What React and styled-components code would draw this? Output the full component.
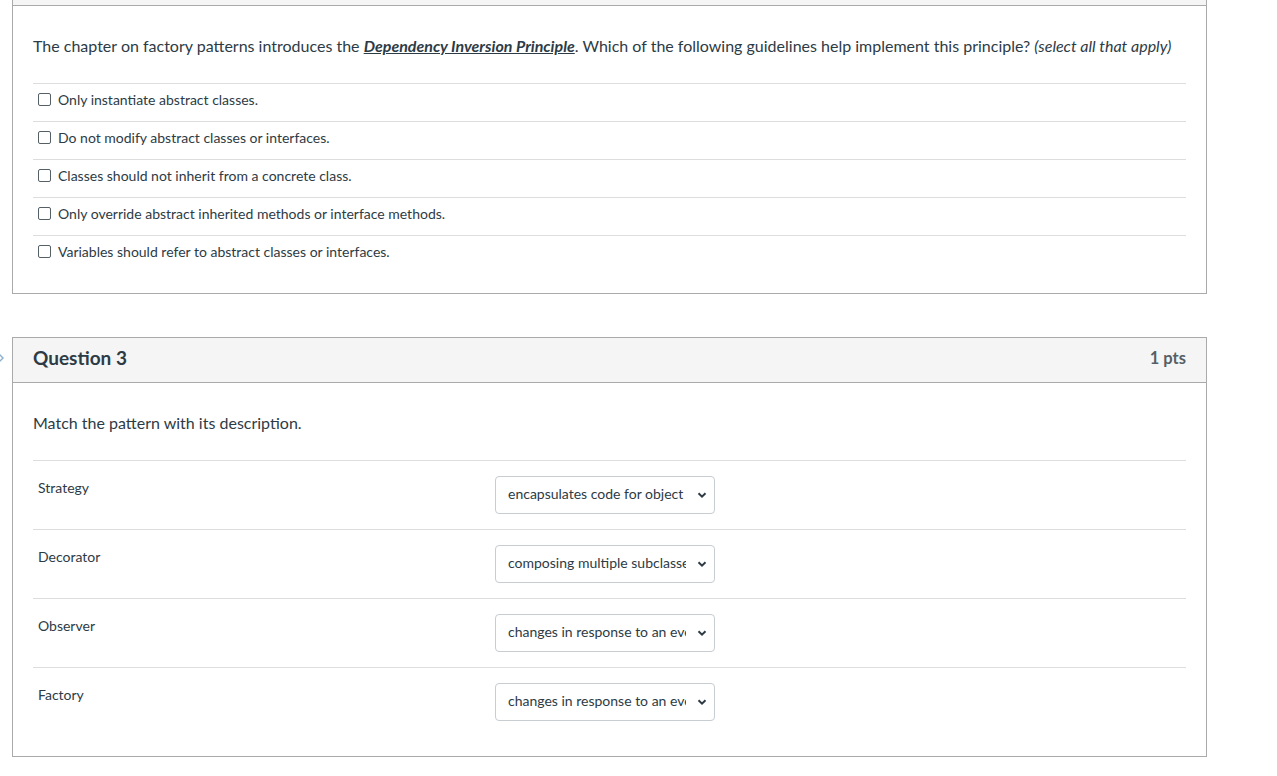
import React from 'react';
import styled, { createGlobalStyle } from 'styled-components';

const GlobalStyle = createGlobalStyle`
  html, body {
    margin: 0;
    padding: 0;
    background: #fff;
  }
  body {
    font-family: Lato, "Noto Sans", "Liberation Sans", sans-serif;
    color: #2d3b45;
  }
`;

const Page = styled.div`
  padding-left: 12px;
  width: 1195px;
  display: flex;
  flex-direction: column;
  gap: 43px;
`;

const Card = styled.div`
  position: relative;
  border: 1px solid #aaaaaa;
  border-top: ${(p) => (p.$clipped ? 'none' : '1px solid #aaaaaa')};
  background: #fff;
`;

const Header = styled.div`
  background: #f5f5f5;
  border-bottom: 1px solid #aaaaaa;
  height: ${(p) => (p.$stub ? '6px' : '45px')};
  padding: ${(p) => (p.$stub ? '0 20px' : '0 20px 4px')};
  display: flex;
  align-items: center;
  justify-content: space-between;
  box-sizing: border-box;
`;

const Title = styled.h2`
  margin: 0;
  font-size: 19px;
  line-height: 24px;
  font-weight: 700;
  color: #2d3b45;
`;

const Points = styled.span`
  font-size: 16.5px;
  line-height: 24px;
  font-weight: 700;
  color: #555f66;
`;

const Pointer = styled.span`
  position: absolute;
  left: -16px;
  top: 14px;
  display: flex;
`;

const Body = styled.div`
  padding: 28px 20px 20px;
`;

const Prompt = styled.p`
  margin: 0 0 25px;
  font-size: 16px;
  line-height: 24px;
`;

const Link = styled.a`
  color: #2d3b45;
  font-weight: 700;
  font-style: italic;
  text-decoration: underline;
`;

const Answers = styled.div`
  border-top: 1px solid #dddddd;
`;

const AnswerRow = styled.label`
  display: flex;
  align-items: center;
  gap: 7px;
  height: 37px;
  box-sizing: border-box;
  padding: 0 0 6px 5px;
  font-size: 14px;
  color: #2d3b45;
  & + & {
    height: 38px;
    border-top: 1px solid #dddddd;
  }
`;

const Box = styled.span`
  width: 11px;
  height: 11px;
  border: 1px solid #555f66;
  border-radius: 2px;
  background: #fff;
  flex: none;
`;

const MatchRow = styled.div`
  display: grid;
  grid-template-columns: 462px 220px;
  border-top: 1px solid #dddddd;
  padding: 15px 0;
`;

const MatchLabel = styled.div`
  padding: 3px 0 0 5px;
  font-size: 14px;
  line-height: 18px;
`;

const Select = styled.div`
  height: 38px;
  box-sizing: border-box;
  border: 1px solid #c7cdd1;
  border-radius: 4px;
  display: flex;
  align-items: center;
  padding: 0 7px 3px 12px;
  gap: 11px;
  font-size: 14px;
  color: #2d3b45;
`;

const SelectText = styled.span`
  flex: 1;
  overflow: hidden;
  white-space: nowrap;
`;

const Chevron = () => (
  <svg width="10" height="8" viewBox="0 0 10 8" style={{ marginTop: 3 }}>
    <path d="M1.5 2.2 L5 5.7 L8.5 2.2" fill="none" stroke="#2d3b45" strokeWidth="2" />
  </svg>
);

const answers = [
  'Only instantiate abstract classes.',
  'Do not modify abstract classes or interfaces.',
  'Classes should not inherit from a concrete class.',
  'Only override abstract inherited methods or interface methods.',
  'Variables should refer to abstract classes or interfaces.',
];

const matches = [
  ['Strategy', 'encapsulates code for object creation'],
  ['Decorator', 'composing multiple subclasses'],
  ['Observer', 'changes in response to an event'],
  ['Factory', 'changes in response to an event'],
];

export default function App() {
  return (
    <>
      <GlobalStyle />
      <Page>
        <Card $clipped>
          <Header $stub />
          <Body>
            <Prompt>
              The chapter on factory patterns introduces the{' '}
              <Link href="#">Dependency Inversion Principle</Link>. Which of the following
              guidelines help implement this principle? <i>(select all that apply)</i>
            </Prompt>
            <Answers>
              {answers.map((a) => (
                <AnswerRow key={a}>
                  <Box />
                  {a}
                </AnswerRow>
              ))}
            </Answers>
          </Body>
        </Card>
        <Card>
          <Pointer>
            <svg width="8" height="12" viewBox="0 0 8 12">
              <path d="M1 1 L6 6 L1 11" fill="none" stroke="#8fb3cf" strokeWidth="1.5" />
            </svg>
          </Pointer>
          <Header>
            <Title>Question 3</Title>
            <Points>1 pts</Points>
          </Header>
          <Body>
            <Prompt>Match the pattern with its description.</Prompt>
            {matches.map(([l, v]) => (
              <MatchRow key={l}>
                <MatchLabel>{l}</MatchLabel>
                <Select>
                  <SelectText>{v}</SelectText>
                  <Chevron />
                </Select>
              </MatchRow>
            ))}
          </Body>
        </Card>
      </Page>
    </>
  );
}
